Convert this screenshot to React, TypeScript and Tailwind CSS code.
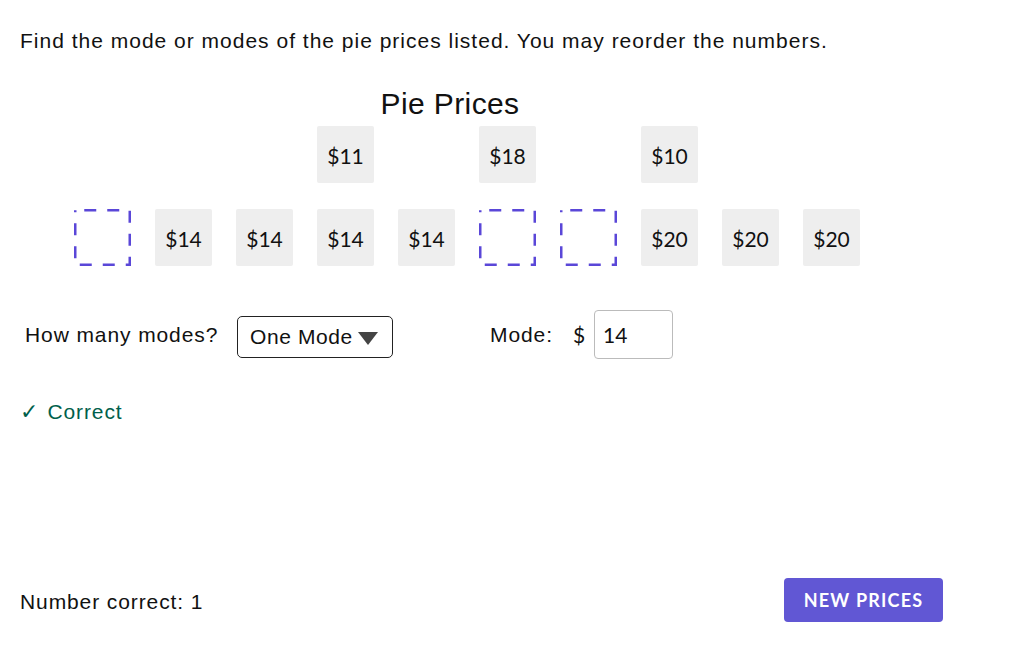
import React, { useState } from 'react';

// Pie price tiles laid out on a 10-slot grid
const topRow: (number | null)[] = [null, null, null, 11, null, 18, null, 10, null, null];
const bottomRow: (number | null)[] = [0, 14, 14, 14, 14, 0, 0, 20, 20, 20];

const Tile = ({ price }: { price: number }) => (
  <div className="w-[57px] h-[57px] bg-[#eeeeee] rounded-[2px] flex items-center justify-center pt-[3px] text-[21px] text-[#111] font-['Lato',sans-serif]">
    ${price}
  </div>
);

const DropZone = () => (
  <svg width="57" height="57" viewBox="0 0 57 57">
    <rect
      x="1.25"
      y="1.25"
      width="54.5"
      height="54.5"
      fill="none"
      stroke="#5a47d8"
      strokeWidth="2.5"
      strokeDasharray="12 11"
      strokeDashoffset="-9"
    />
  </svg>
);

const App = () => {
  const [mode, setMode] = useState('14');

  return (
    <div className="w-[1032px] h-[645px] bg-white flex flex-col font-['Liberation_Sans',Arial,sans-serif] text-[#111] tracking-[0.9px]">
      <p className="pt-[29px] pl-5 text-[21px] leading-6 tracking-[1px]">
        Find the mode or modes of the pie prices listed. You may reorder the numbers.
      </p>

      <h2 className="w-[900px] text-center text-[30px] leading-9 mt-[33px] tracking-[0.4px]">Pie Prices</h2>

      {/* top row */}
      <div className="grid grid-cols-[repeat(10,57px)] gap-x-6 ml-[74px] mt-[4px] h-[57px] tracking-normal">
        {topRow.map((p, i) => (p ? <Tile key={i} price={p} /> : <div key={i} />))}
      </div>

      {/* bottom row */}
      <div className="grid grid-cols-[repeat(10,57px)] gap-x-6 ml-[74px] mt-[26px] tracking-normal">
        {bottomRow.map((p, i) => (p ? <Tile key={i} price={p} /> : <DropZone key={i} />))}
      </div>

      {/* controls */}
      <div className="flex items-center mt-[44px] pl-[25px] text-[21px] whitespace-nowrap">
        <span className="w-[192px] shrink-0">How many modes?</span>
        <div className="ml-[20px] shrink-0 w-[156px] h-[42px] border border-[#222] rounded-[5px] flex items-center pl-[12px] mt-[4px]">
          <span className="tracking-[0.6px]">One Mode</span>
          <svg width="20" height="16" viewBox="0 0 20 16" className="ml-[5px] mt-[3px]">
            <path d="M0 2 L20 2 L10 15 Z" fill="#444" />
          </svg>
        </div>
        <span className="ml-[97px] w-[66px] shrink-0">Mode:</span>
        <span className="ml-[17px] font-['Lato',sans-serif]">$</span>
        <input
          value={mode}
          onChange={(e) => setMode(e.target.value)}
          className="ml-[8px] w-[79px] h-[49px] border border-[#bbbbbb] rounded-[4px] px-[8px] text-[21px] tracking-normal font-['Lato',sans-serif] outline-none"
        />
      </div>

      <div className="mt-[36px] pl-5 text-[21px] text-[#005f4b] flex items-center">
        <span className="font-['DejaVu_Sans',sans-serif] text-[22px] tracking-normal">✓</span>
        <span className="ml-[9px]">Correct</span>
      </div>

      {/* footer */}
      <div className="mt-auto mb-[23px] pl-5 w-[943px] flex items-center justify-between">
        <span className="text-[21px] pt-[4px]">Number correct: 1</span>
        <button className="w-[159px] h-[44px] bg-[#6157d4] rounded-[4px] text-white font-['Lato',sans-serif] font-bold text-[18px] tracking-[1.2px]">
          NEW PRICES
        </button>
      </div>
    </div>
  );
};

export default App;
